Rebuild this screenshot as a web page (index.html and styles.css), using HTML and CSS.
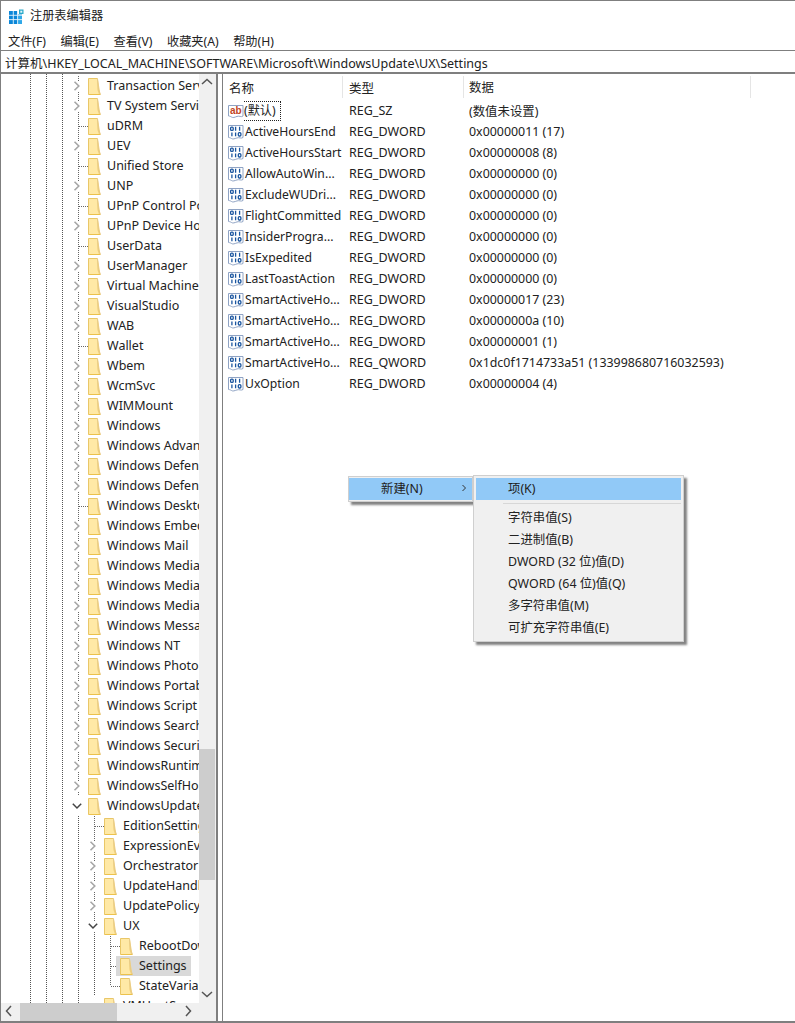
FILE: index.html
```html
<!DOCTYPE html>
<html lang="zh-CN">
<head>
<meta charset="utf-8">
<title>注册表编辑器</title>
<link rel="stylesheet" href="styles.css">
</head>
<body>
<svg class="sprite" width="0" height="0" aria-hidden="true">
  <symbol id="folder" viewBox="0 0 13 17">
    <path d="M.5.5h8.5l1 1.500 .5 10 1.500 4.500H.5z" fill="#ffe9a6"/>
    <path d="M9 .5h.8L12.500 16.500H11L9.500 12z" fill="#f4d27a"/>
    <path d="M.5 16.500V.5h8.800" fill="none" stroke="#e9c768"/>
    <path d="M.5 16.500h12" stroke="#ecc24c" fill="none"/>
    <path d="M9.500 .5l1 11.500 2 4.500" fill="none" stroke="#e6cb8b"/>
  </symbol>
  <symbol id="chev-r" viewBox="0 0 10 10"><path d="M2.500 .8 6.800 5 2.500 9.200" fill="none" stroke="#a6a6a6" stroke-width="1.600"/></symbol>
  <symbol id="chev-d" viewBox="0 0 10 10"><path d="M.8 2.800 5 7 9.200 2.800" fill="none" stroke="#444" stroke-width="1.500"/></symbol>
  <symbol id="ic-bin" viewBox="0 0 16 16">
    <path d="M.5 1.500h14.500v12c-2 1.400-3.500-.4-6 .4s-4 1.600-5.500 .6-3-1-3-1z" fill="#fff" stroke="#8fa3c4"/>
    <g fill="none" stroke="#1a559f" stroke-width="1.300">
      <rect x="2.600" y="3.100" width="2.600" height="3.300" rx="1"/>
      <path d="M7.600 2.800v3.900M11.600 2.800v3.900"/>
      <path d="M3.900 8.400v3.800M7.600 8.400v3.800"/>
      <rect x="10.300" y="8.700" width="2.600" height="3.300" rx="1"/>
    </g>
  </symbol>
  <symbol id="app" viewBox="0 0 15 15">
    <path d="M0 2h13v13H0z" fill="#0a86d8"/>
    <path d="M8.600 6.300H13V15H8.600z" fill="#2fa8e8"/>
    <path d="M0 6.300h13M0 10.600h13M4.300 2v13M8.600 2v13" stroke="#e6f4fc" stroke-width=".9"/>
    <path d="M8.500 0H15v5.500H8.500z" fill="#fff"/>
    <path d="M10 .5h4.500V5H10z" fill="#2aa9c8"/>
    <path d="M11.300 1.700h2v2h-2z" fill="#e8f6fb"/>
  </symbol>
</svg>

<div class="window">
  <header class="titlebar">
    <svg class="app-icon"><use href="#app"/></svg>
    <span>注册表编辑器</span>
  </header>
  <nav class="menubar">
    <span>文件(F)</span>
    <span>编辑(E)</span>
    <span>查看(V)</span>
    <span>收藏夹(A)</span>
    <span>帮助(H)</span>
  </nav>
  <div class="address">计算机\HKEY_LOCAL_MACHINE\SOFTWARE\Microsoft\WindowsUpdate\UX\Settings</div>

  <main class="panes">
    <section class="tree-pane">
      <div class="tree-top">
        <div class="tree">
          <div class="row l1 guide"><svg class="chev"><use href="#chev-r"/></svg><svg class="folder"><use href="#folder"/></svg><span class="label">Transaction Server</span></div>
          <div class="row l1 guide"><svg class="chev"><use href="#chev-r"/></svg><svg class="folder"><use href="#folder"/></svg><span class="label">TV System Services</span></div>
          <div class="row l1 guide"><i class="stub"></i><svg class="folder"><use href="#folder"/></svg><span class="label">uDRM</span></div>
          <div class="row l1 guide"><svg class="chev"><use href="#chev-r"/></svg><svg class="folder"><use href="#folder"/></svg><span class="label">UEV</span></div>
          <div class="row l1 guide"><i class="stub"></i><svg class="folder"><use href="#folder"/></svg><span class="label">Unified Store</span></div>
          <div class="row l1 guide"><svg class="chev"><use href="#chev-r"/></svg><svg class="folder"><use href="#folder"/></svg><span class="label">UNP</span></div>
          <div class="row l1 guide"><i class="stub"></i><svg class="folder"><use href="#folder"/></svg><span class="label">UPnP Control Point</span></div>
          <div class="row l1 guide"><svg class="chev"><use href="#chev-r"/></svg><svg class="folder"><use href="#folder"/></svg><span class="label">UPnP Device Host</span></div>
          <div class="row l1 guide"><i class="stub"></i><svg class="folder"><use href="#folder"/></svg><span class="label">UserData</span></div>
          <div class="row l1 guide"><svg class="chev"><use href="#chev-r"/></svg><svg class="folder"><use href="#folder"/></svg><span class="label">UserManager</span></div>
          <div class="row l1 guide"><svg class="chev"><use href="#chev-r"/></svg><svg class="folder"><use href="#folder"/></svg><span class="label">Virtual Machine</span></div>
          <div class="row l1 guide"><svg class="chev"><use href="#chev-r"/></svg><svg class="folder"><use href="#folder"/></svg><span class="label">VisualStudio</span></div>
          <div class="row l1 guide"><svg class="chev"><use href="#chev-r"/></svg><svg class="folder"><use href="#folder"/></svg><span class="label">WAB</span></div>
          <div class="row l1 guide"><i class="stub"></i><svg class="folder"><use href="#folder"/></svg><span class="label">Wallet</span></div>
          <div class="row l1 guide"><svg class="chev"><use href="#chev-r"/></svg><svg class="folder"><use href="#folder"/></svg><span class="label">Wbem</span></div>
          <div class="row l1 guide"><svg class="chev"><use href="#chev-r"/></svg><svg class="folder"><use href="#folder"/></svg><span class="label">WcmSvc</span></div>
          <div class="row l1 guide"><svg class="chev"><use href="#chev-r"/></svg><svg class="folder"><use href="#folder"/></svg><span class="label">WIMMount</span></div>
          <div class="row l1 guide"><svg class="chev"><use href="#chev-r"/></svg><svg class="folder"><use href="#folder"/></svg><span class="label">Windows</span></div>
          <div class="row l1 guide"><svg class="chev"><use href="#chev-r"/></svg><svg class="folder"><use href="#folder"/></svg><span class="label">Windows Advanced Threat Protection</span></div>
          <div class="row l1 guide"><svg class="chev"><use href="#chev-r"/></svg><svg class="folder"><use href="#folder"/></svg><span class="label">Windows Defender</span></div>
          <div class="row l1 guide"><svg class="chev"><use href="#chev-r"/></svg><svg class="folder"><use href="#folder"/></svg><span class="label">Windows Defender Security Center</span></div>
          <div class="row l1 guide"><i class="stub"></i><svg class="folder"><use href="#folder"/></svg><span class="label">Windows Desktop Search</span></div>
          <div class="row l1 guide"><svg class="chev"><use href="#chev-r"/></svg><svg class="folder"><use href="#folder"/></svg><span class="label">Windows Embedded</span></div>
          <div class="row l1 guide"><svg class="chev"><use href="#chev-r"/></svg><svg class="folder"><use href="#folder"/></svg><span class="label">Windows Mail</span></div>
          <div class="row l1 guide"><svg class="chev"><use href="#chev-r"/></svg><svg class="folder"><use href="#folder"/></svg><span class="label">Windows Media Device Manager</span></div>
          <div class="row l1 guide"><svg class="chev"><use href="#chev-r"/></svg><svg class="folder"><use href="#folder"/></svg><span class="label">Windows Media Foundation</span></div>
          <div class="row l1 guide"><svg class="chev"><use href="#chev-r"/></svg><svg class="folder"><use href="#folder"/></svg><span class="label">Windows Media Player NSS</span></div>
          <div class="row l1 guide"><svg class="chev"><use href="#chev-r"/></svg><svg class="folder"><use href="#folder"/></svg><span class="label">Windows Messaging Subsystem</span></div>
          <div class="row l1 guide"><svg class="chev"><use href="#chev-r"/></svg><svg class="folder"><use href="#folder"/></svg><span class="label">Windows NT</span></div>
          <div class="row l1 guide"><svg class="chev"><use href="#chev-r"/></svg><svg class="folder"><use href="#folder"/></svg><span class="label">Windows Photo Viewer</span></div>
          <div class="row l1 guide"><svg class="chev"><use href="#chev-r"/></svg><svg class="folder"><use href="#folder"/></svg><span class="label">Windows Portable Devices</span></div>
          <div class="row l1 guide"><svg class="chev"><use href="#chev-r"/></svg><svg class="folder"><use href="#folder"/></svg><span class="label">Windows Script Host</span></div>
          <div class="row l1 guide"><svg class="chev"><use href="#chev-r"/></svg><svg class="folder"><use href="#folder"/></svg><span class="label">Windows Search</span></div>
          <div class="row l1 guide"><svg class="chev"><use href="#chev-r"/></svg><svg class="folder"><use href="#folder"/></svg><span class="label">Windows Security Health</span></div>
          <div class="row l1 guide"><svg class="chev"><use href="#chev-r"/></svg><svg class="folder"><use href="#folder"/></svg><span class="label">WindowsRuntime</span></div>
          <div class="row l1 guide"><svg class="chev"><use href="#chev-r"/></svg><svg class="folder"><use href="#folder"/></svg><span class="label">WindowsSelfHost</span></div>
          <div class="row l1"><svg class="chev"><use href="#chev-d"/></svg><svg class="folder"><use href="#folder"/></svg><span class="label">WindowsUpdate</span></div>
          <div class="row l2 guide"><i class="stub"></i><svg class="folder"><use href="#folder"/></svg><span class="label">EditionSettings</span></div>
          <div class="row l2 guide"><svg class="chev"><use href="#chev-r"/></svg><svg class="folder"><use href="#folder"/></svg><span class="label">ExpressionEvaluators</span></div>
          <div class="row l2 guide"><svg class="chev"><use href="#chev-r"/></svg><svg class="folder"><use href="#folder"/></svg><span class="label">Orchestrator</span></div>
          <div class="row l2 guide"><svg class="chev"><use href="#chev-r"/></svg><svg class="folder"><use href="#folder"/></svg><span class="label">UpdateHandlers</span></div>
          <div class="row l2 guide"><svg class="chev"><use href="#chev-r"/></svg><svg class="folder"><use href="#folder"/></svg><span class="label">UpdatePolicy</span></div>
          <div class="row l2 guide"><svg class="chev"><use href="#chev-d"/></svg><svg class="folder"><use href="#folder"/></svg><span class="label">UX</span></div>
          <div class="row l3 guide"><i class="stub"></i><svg class="folder"><use href="#folder"/></svg><span class="label">RebootDowntime</span></div>
          <div class="row l3 guide"><i class="stub short"></i><span class="sel"><svg class="folder"><use href="#folder"/></svg><span class="label">Settings</span></span></div>
          <div class="row l3 guide last"><i class="stub"></i><svg class="folder"><use href="#folder"/></svg><span class="label">StateVariables</span></div>
          <div class="row l2 leaf"><svg class="folder"><use href="#folder"/></svg><span class="label">VMHostSvc</span></div>
        </div>
        <div class="vscroll">
          <svg class="arrow"><path d="M3 10 8 5.500 13 10" fill="none" stroke="#555" stroke-width="1.500"/></svg>
          <div class="vtrack"><div class="vthumb"></div></div>
          <svg class="arrow"><path d="M3 6 8 10.500 13 6" fill="none" stroke="#555" stroke-width="1.500"/></svg>
        </div>
      </div>
      <div class="hscroll">
        <svg class="arrow-h"><path d="M10 3 5.500 8 10 13" fill="none" stroke="#555" stroke-width="1.500"/></svg>
        <div class="hthumb"></div>
        <svg class="arrow-h end"><path d="M6 3 10.500 8 6 13" fill="none" stroke="#555" stroke-width="1.500"/></svg>
      </div>
    </section>

    <section class="list-pane">
      <div class="list-head">
        <span class="c-name">名称</span><span class="c-type">类型</span><span class="c-data">数据</span>
      </div>
      <div class="list-row">
        <svg class="val-icon" viewBox="0 0 16 16">
          <path d="M.5 2.500h14.500v10.500c-2 1.600-3.500-.6-6 .4s-4 1.600-5.500 .6-3-1-3-1z" fill="#fff" stroke="#8fa3c4"/>
          <text x="7.800" y="10.500" text-anchor="middle" class="ab-text">ab</text>
        </svg>
        <span class="c-name"><span class="focus">(默认)</span></span><span class="c-type">REG_SZ</span><span class="c-data">(数值未设置)</span>
      </div>
      <div class="list-row"><svg class="val-icon"><use href="#ic-bin"/></svg><span class="c-name">ActiveHoursEnd</span><span class="c-type">REG_DWORD</span><span class="c-data">0x00000011 (17)</span></div>
      <div class="list-row"><svg class="val-icon"><use href="#ic-bin"/></svg><span class="c-name">ActiveHoursStart</span><span class="c-type">REG_DWORD</span><span class="c-data">0x00000008 (8)</span></div>
      <div class="list-row"><svg class="val-icon"><use href="#ic-bin"/></svg><span class="c-name">AllowAutoWin...</span><span class="c-type">REG_DWORD</span><span class="c-data">0x00000000 (0)</span></div>
      <div class="list-row"><svg class="val-icon"><use href="#ic-bin"/></svg><span class="c-name">ExcludeWUDri...</span><span class="c-type">REG_DWORD</span><span class="c-data">0x00000000 (0)</span></div>
      <div class="list-row"><svg class="val-icon"><use href="#ic-bin"/></svg><span class="c-name">FlightCommitted</span><span class="c-type">REG_DWORD</span><span class="c-data">0x00000000 (0)</span></div>
      <div class="list-row"><svg class="val-icon"><use href="#ic-bin"/></svg><span class="c-name">InsiderProgra...</span><span class="c-type">REG_DWORD</span><span class="c-data">0x00000000 (0)</span></div>
      <div class="list-row"><svg class="val-icon"><use href="#ic-bin"/></svg><span class="c-name">IsExpedited</span><span class="c-type">REG_DWORD</span><span class="c-data">0x00000000 (0)</span></div>
      <div class="list-row"><svg class="val-icon"><use href="#ic-bin"/></svg><span class="c-name">LastToastAction</span><span class="c-type">REG_DWORD</span><span class="c-data">0x00000000 (0)</span></div>
      <div class="list-row"><svg class="val-icon"><use href="#ic-bin"/></svg><span class="c-name">SmartActiveHo...</span><span class="c-type">REG_DWORD</span><span class="c-data">0x00000017 (23)</span></div>
      <div class="list-row"><svg class="val-icon"><use href="#ic-bin"/></svg><span class="c-name">SmartActiveHo...</span><span class="c-type">REG_DWORD</span><span class="c-data">0x0000000a (10)</span></div>
      <div class="list-row"><svg class="val-icon"><use href="#ic-bin"/></svg><span class="c-name">SmartActiveHo...</span><span class="c-type">REG_DWORD</span><span class="c-data">0x00000001 (1)</span></div>
      <div class="list-row"><svg class="val-icon"><use href="#ic-bin"/></svg><span class="c-name">SmartActiveHo...</span><span class="c-type">REG_QWORD</span><span class="c-data">0x1dc0f1714733a51 (133998680716032593)</span></div>
      <div class="list-row"><svg class="val-icon"><use href="#ic-bin"/></svg><span class="c-name">UxOption</span><span class="c-type">REG_DWORD</span><span class="c-data">0x00000004 (4)</span></div>

      <div class="ctx ctx-main">
        <div class="ctx-new"><span>新建(N)</span><svg class="ctx-arrow" viewBox="0 0 6 8"><path d="M1.500 1 4.500 4 1.500 7" fill="none" stroke="#333" stroke-width="1"/></svg></div>
      </div>
      <div class="ctx ctx-sub">
        <div class="ctx-item hot">项(K)</div>
        <div class="ctx-sep"></div>
        <div class="ctx-item">字符串值(S)</div>
        <div class="ctx-item">二进制值(B)</div>
        <div class="ctx-item">DWORD (32 位)值(D)</div>
        <div class="ctx-item">QWORD (64 位)值(Q)</div>
        <div class="ctx-item">多字符串值(M)</div>
        <div class="ctx-item">可扩充字符串值(E)</div>
      </div>
    </section>
  </main>
</div>
</body>
</html>
```

FILE: styles.css
```css
* { box-sizing: border-box; }
html, body { margin: 0; padding: 0; background: #fff; }
body {
  font-family: "Noto Sans", "Noto Sans CJK SC", sans-serif;
  font-size: 12.500px;
  color: #222;
  overflow: hidden;
}
.sprite { position: absolute; }
.ab-text { font: bold 10px "Liberation Sans", sans-serif; fill: #c2451f; }

.window {
  width: 795px;
  height: 1023px;
  display: flex;
  flex-direction: column;
  border-top: 1px solid #7f7f7f;
  border-left: 1px solid #7f7f7f;
  border-bottom: 2px solid #7f7f7f;
}

.titlebar {
  height: 28px;
  flex: none;
  display: flex;
  align-items: center;
  padding: 0 0 0 8px;
  gap: 6px;
  font-size: 12.200px;
}
.app-icon { width: 15px; height: 15px; margin-top: 2px; }

.menubar {
  height: 22px;
  flex: none;
  display: flex;
  align-items: center;
  padding: 2px 0 0 7px;
  gap: 14.500px;
  font-size: 12.200px;
  border-bottom: 1px solid #7f7f7f;
}

.address {
  height: 23px;
  flex: none;
  display: flex;
  align-items: center;
  padding: 2px 0 0 4px;
  border-bottom: 2px solid #7f7f7f;
  white-space: nowrap;
}

.panes { flex: 1; min-height: 0; display: flex; }

.tree-pane {
  width: 217px;
  flex: none;
  border-right: 2px solid #7f7f7f;
  display: flex;
  flex-direction: column;
}
.tree-top { flex: 1; min-height: 0; display: flex; }

.tree {
  width: 198px;
  flex: none;
  overflow: hidden;
  padding-top: 2px;
  background-image:
    repeating-linear-gradient(to bottom, #555 0 1px, transparent 1px 2px),
    repeating-linear-gradient(to bottom, #555 0 1px, transparent 1px 2px),
    repeating-linear-gradient(to bottom, #555 0 1px, transparent 1px 2px);
  background-size: 1px 100%;
  background-repeat: no-repeat;
  background-position: 29px 0, 45px 0, 61px 0;
}

.row {
  position: relative;
  height: 20px;
  display: flex;
  align-items: center;
  white-space: nowrap;
}
.l1 { padding-left: 70px; }
.l2 { padding-left: 86px; }
.l3 { padding-left: 102px; }

.guide::before {
  content: "";
  position: absolute;
  top: 0;
  bottom: 0;
  width: 1px;
  background-image: repeating-linear-gradient(to bottom, #666 0 1px, transparent 1px 2px);
}
.l1.guide::before { left: 77px; }
.l2.guide::before { left: 93px; }
.l3.guide::before { left: 109px; }
.l3.guide.last::before { bottom: 10px; }
.l2::after, .l3::after {
  content: "";
  position: absolute;
  left: 77px;
  top: 0;
  bottom: 0;
  width: 1px;
  background-image: repeating-linear-gradient(to bottom, #555 0 1px, transparent 1px 2px);
}
.l3 { background: repeating-linear-gradient(to bottom, #555 0 1px, transparent 1px 2px) 93px 0 / 1px 100% no-repeat; }

.chev { position: relative; z-index: 1; width: 10px; height: 10px; flex: none; margin-left: 1px; margin-right: 6px; background: #fff; }
.stub {
  width: 10px;
  height: 1px;
  flex: none;
  margin-left: 8px;
  margin-right: -1px;
  background-image: repeating-linear-gradient(to right, #666 0 1px, transparent 1px 2px);
}
.stub.short { width: 5px; margin-right: 0; }
.folder { width: 13px; height: 17px; flex: none; }
.leaf { padding-left: 103px; }
.label { margin-left: 6px; line-height: 20px; height: 20px; color: #222; }
.sel {
  position: relative;
  z-index: 1;
  height: 20px;
  display: flex;
  align-items: center;
  padding: 0 4px;
  background: #d9d9d9;
}

.vscroll { width: 17px; flex: none; background: #f0f0f0; display: flex; flex-direction: column; }
.arrow { width: 16px; height: 17px; flex: none; }
.vtrack { flex: 1; padding-top: 658px; }
.vthumb { height: 131px; margin-right: 1px; background: #cdcdcd; }

.hscroll { height: 18px; flex: none; background: #f0f0f0; display: flex; align-items: stretch; padding-right: 17px; }
.arrow-h { width: 19px; height: 18px; flex: none; }
.arrow-h.end { margin-left: auto; }
.hthumb { width: 97px; background: #cdcdcd; }

.list-pane { position: relative; flex: 1; min-width: 0; margin-left: 4px; border-left: 1px solid #7f7f7f; }

.list-head {
  height: 26px;
  display: flex;
  align-items: center;
  background:
    linear-gradient(#e5e5e5, #e5e5e5) 119px 2px / 1px 22px no-repeat,
    linear-gradient(#e5e5e5, #e5e5e5) 240px 2px / 1px 22px no-repeat,
    linear-gradient(#e5e5e5, #e5e5e5) 527px 2px / 1px 22px no-repeat;
}
.list-head .c-name { width: 120px; padding-left: 6px; }

.list-row { height: 21px; display: flex; align-items: center; white-space: nowrap; }
.val-icon { width: 16px; height: 16px; flex: none; margin-left: 5px; }
.list-row .c-name { width: 99px; flex: none; padding-left: 1px; overflow: hidden; font-size: 12.200px; }
.c-type { width: 120px; flex: none; padding-left: 6px; }
.c-data { padding-left: 6px; font-size: 12.400px; }
.focus { display: inline-block; vertical-align: top; outline: 1px dotted #222; outline-offset: -1px; height: 20px; line-height: 19px; padding: 0 5px 0 1px; margin-left: -2px; }

.ctx { position: absolute; background: #f0f0f0; box-shadow: 3px 3px 2px rgba(90, 90, 90, .75); border: 1px solid #cfcfcf; font-size: 12.400px; }
.ctx-main { left: 125px; top: 402px; width: 125px; height: 26px; padding: 1px 0; z-index: 1; }
.ctx-new { height: 100%; background: #91c9f7; display: flex; align-items: center; padding: 0 0 2px 32px; }
.ctx-arrow { width: 6px; height: 8px; margin-left: 38px; }
.ctx-sub { left: 250px; top: 401px; width: 211px; height: 167px; padding: 2px; z-index: 2; }
.ctx-item { height: 22px; display: flex; align-items: center; padding-left: 32px; }
.ctx-item.hot { background: #91c9f7; padding-bottom: 2px; }
.ctx-sep { height: 1px; background: #d7d7d7; margin: 3px 0 2px 27px; }
```
